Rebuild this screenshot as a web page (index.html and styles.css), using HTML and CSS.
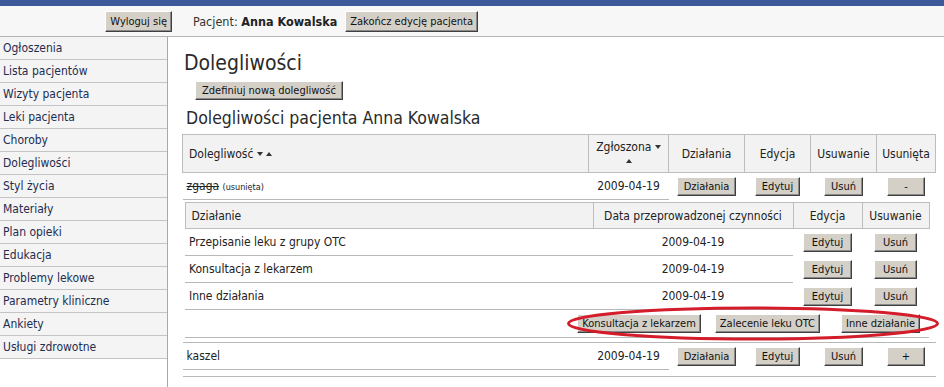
FILE: index.html
```html
<!DOCTYPE html>
<html lang="pl">
<head>
    <meta charset="UTF-8">
    <meta name="viewport" content="width=device-width, initial-scale=1.0">
    <title>Dolegliwości</title>
    <link rel="stylesheet" href="styles.css">
</head>
<body>

    <div class="top-bar"></div>

    <div class="header">
        <div class="header-left">
            <button class="btn btn-big">Wyloguj się</button>
        </div>
        <div class="patient">Pacjent: <b>Anna Kowalska</b></div>
        <button class="btn btn-big">Zakończ edycję pacjenta</button>
    </div>

    <div class="page">
        <div class="sidebar">
            <ul class="menu">
                <li><a href="#">Ogłoszenia</a></li>
                <li><a href="#">Lista pacjentów</a></li>
                <li><a href="#">Wizyty pacjenta</a></li>
                <li><a href="#">Leki pacjenta</a></li>
                <li><a href="#">Choroby</a></li>
                <li><a href="#">Dolegliwości</a></li>
                <li><a href="#">Styl życia</a></li>
                <li><a href="#">Materiały</a></li>
                <li><a href="#">Plan opieki</a></li>
                <li><a href="#">Edukacja</a></li>
                <li><a href="#">Problemy lekowe</a></li>
                <li><a href="#">Parametry kliniczne</a></li>
                <li><a href="#">Ankiety</a></li>
                <li><a href="#">Usługi zdrowotne</a></li>
            </ul>
        </div>

        <div class="content">
            <h1>Dolegliwości</h1>
            <button class="btn new-btn">Zdefiniuj nową dolegliwość</button>
            <h2>Dolegliwości pacjenta Anna Kowalska</h2>

            <table class="grid">
                <thead>
                    <tr>
                        <th class="left">Dolegliwość <span class="arrow-down"></span> <span class="arrow-up"></span></th>
                        <th class="col-date">Zgłoszona <span class="arrow-down"></span><br><span class="arrow-up"></span></th>
                        <th class="col-act">Działania</th>
                        <th class="col-edit">Edycja</th>
                        <th class="col-del">Usuwanie</th>
                        <th class="col-deleted">Usunięta</th>
                    </tr>
                </thead>
                <tbody>
                    <tr>
                        <td class="text"><s>zgaga</s> <small>(usunięta)</small></td>
                        <td class="text center">2009-04-19</td>
                        <td class="center"><button class="btn">Działania</button></td>
                        <td class="center"><button class="btn">Edytuj</button></td>
                        <td class="center"><button class="btn">Usuń</button></td>
                        <td class="center"><button class="btn btn-sign">-</button></td>
                    </tr>
                    <tr>
                        <td colspan="6" class="nested-cell">
                            <table class="grid sub">
                                <thead>
                                    <tr>
                                        <th class="left">Działanie</th>
                                        <th class="sub-date">Data przeprowadzonej czynności</th>
                                        <th class="sub-edit">Edycja</th>
                                        <th class="sub-del">Usuwanie</th>
                                    </tr>
                                </thead>
                                <tbody>
                                    <tr>
                                        <td class="text">Przepisanie leku z grupy OTC</td>
                                        <td class="text center">2009-04-19</td>
                                        <td class="center"><button class="btn btn-wide">Edytuj</button></td>
                                        <td class="center"><button class="btn btn-wide">Usuń</button></td>
                                    </tr>
                                    <tr>
                                        <td class="text">Konsultacja z lekarzem</td>
                                        <td class="text center">2009-04-19</td>
                                        <td class="center"><button class="btn btn-wide">Edytuj</button></td>
                                        <td class="center"><button class="btn btn-wide">Usuń</button></td>
                                    </tr>
                                    <tr>
                                        <td class="text">Inne działania</td>
                                        <td class="text center">2009-04-19</td>
                                        <td class="center"><button class="btn btn-wide">Edytuj</button></td>
                                        <td class="center"><button class="btn btn-wide">Usuń</button></td>
                                    </tr>
                                    <tr>
                                        <td colspan="4" class="add-row">
                                            <span class="add-buttons">
                                                <button class="btn">Konsultacja z lekarzem</button>
                                                <button class="btn">Zalecenie leku OTC</button>
                                                <button class="btn btn-last">Inne działanie</button>
                                                <svg class="marker" viewBox="0 0 374 35" preserveAspectRatio="none">
                                                    <ellipse cx="187" cy="17.5" rx="184.5" ry="15.5" fill="none" stroke="#d41c2a" stroke-width="3"/>
                                                </svg>
                                            </span>
                                        </td>
                                    </tr>
                                </tbody>
                            </table>
                        </td>
                    </tr>
                    <tr>
                        <td class="text">kaszel</td>
                        <td class="text center">2009-04-19</td>
                        <td class="center"><button class="btn">Działania</button></td>
                        <td class="center"><button class="btn">Edytuj</button></td>
                        <td class="center"><button class="btn">Usuń</button></td>
                        <td class="center"><button class="btn btn-sign">+</button></td>
                    </tr>
                </tbody>
                <tfoot>
                    <tr><td colspan="6" class="foot"></td></tr>
                </tfoot>
            </table>
        </div>
    </div>

</body>
</html>
```

FILE: styles.css
```css
body {
    margin: 0;
    font-family: "DejaVu Sans Condensed", "DejaVu Sans", sans-serif;
    font-size: 12px;
    color: #222;
    background: #fff;
}

.top-bar {
    height: 6px;
    background-color: #3c5a99;
}

/* Header with patient name */
.header {
    display: flex;
    align-items: center;
    height: 30px;
    background-color: #f7f7f7;
    border-bottom: 1px solid #b4b4b4;
}

.header-left {
    width: 172px;
    display: flex;
    justify-content: flex-end;
}

.patient {
    margin-left: 21px;
    margin-right: 8px;
    font-size: 12.5px;
    color: #333;
}

.patient b {
    color: #222;
}

/* Buttons */
.btn {
    font-family: inherit;
    font-size: 11px;
    line-height: 13px;
    padding: 2px 6px;
    color: #111;
    background-color: #d4d0c8;
    border: 1px solid;
    border-color: #fff #404040 #404040 #fff;
    box-shadow: inset -1px -1px #8a8a8a;
    border-radius: 0;
    cursor: pointer;
}

.btn-big {
    line-height: 15px;
    padding: 2px 4px;
}

.btn-wide {
    padding: 2px 8px;
}

.btn-sign {
    min-width: 38px;
}

/* Left menu */
.page {
    display: flex;
    min-height: 350px;
}

.sidebar {
    width: 167px;
    border-right: 1px solid #a8a8a8;
}

.menu {
    list-style: none;
    margin: 0;
    padding: 0;
}

.menu li {
    height: 22px;
    border-bottom: 1px solid #c4c4c4;
    background-color: #f4f4f4;
}

.menu a {
    display: block;
    padding-left: 3px;
    line-height: 22px;
    color: #1e2d50;
    text-decoration: none;
}

/* Content */
.content {
    padding-left: 14px;
}

h1 {
    margin: 13px 0 0 2px;
    font-size: 21px;
    line-height: 26px;
    font-weight: normal;
    color: #2a2a2a;
}

.new-btn {
    margin: 5px 0 0 13px;
}

h2 {
    margin: 7px 0 5px 4px;
    font-size: 17.5px;
    line-height: 22px;
    font-weight: normal;
    color: #2a2a2a;
}

/* Tables */
.grid {
    width: 754px;
    border-collapse: collapse;
    table-layout: fixed;
}

.grid th {
    height: 37px;
    padding: 0 2px;
    font-weight: normal;
    text-align: center;
    background-color: #f2f2f2;
    border: 1px solid #bdbdbd;
}

.grid th.left {
    text-align: left;
    padding-left: 6px;
}

.grid td {
    height: 26px;
    padding: 0;
    vertical-align: middle;
}

.grid td.text {
    padding-left: 4px;
    border-bottom: 1px solid #b8b8b8;
}

.grid td.center {
    text-align: center;
    padding-left: 0;
}

.col-date { width: 75px; }
.col-act { width: 71px; }
.col-edit { width: 61px; }
.col-del { width: 61px; }
.col-deleted { width: 54px; }

small {
    font-size: 9px;
}

.arrow-down,
.arrow-up {
    display: inline-block;
    width: 0;
    height: 0;
    border-left: 3.5px solid transparent;
    border-right: 3.5px solid transparent;
    vertical-align: middle;
}

.arrow-down {
    border-top: 4px solid #333;
}

.arrow-up {
    border-bottom: 4px solid #333;
}

/* Nested table of actions */
.grid td.nested-cell {
    padding: 2px 7px 4px 2px;
    border-bottom: 1px solid #b8b8b8;
}

.sub {
    width: 745px;
}

.sub th {
    height: 25px;
}

.sub-date { width: 195px; }
.sub-edit { width: 64px; }
.sub-del { width: 62px; }

.grid td.add-row {
    height: 27px;
    text-align: right;
    padding-right: 9px;
    border-bottom: 1px solid #b8b8b8;
}

.add-buttons {
    position: relative;
    display: inline-flex;
    gap: 14px;
}

.add-buttons .btn {
    padding: 2px 4px;
}

.add-buttons .btn-last {
    margin-left: 7px;
}

.marker {
    position: absolute;
    right: -20px;
    top: -8px;
    width: 374px;
    height: 35px;
    pointer-events: none;
}

.grid td.foot {
    height: 6px;
    border-bottom: 1px solid #b8b8b8;
}
```
